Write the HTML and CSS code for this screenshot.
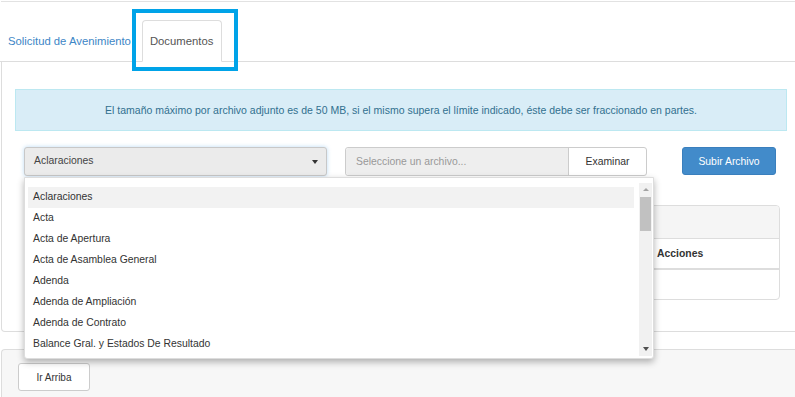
FILE: index.html
```html
<!DOCTYPE html>
<html lang="es">
<head>
<meta charset="UTF-8">
<meta name="viewport" content="width=device-width, initial-scale=1.0">
<title>Documentos</title>
<link rel="stylesheet" href="styles.css">
</head>
<body>
<div class="page">
  <div class="prev-panel"></div>

  <!-- pestañas -->
  <ul class="tabs">
    <li class="tab"><a href="#">Solicitud de Avenimiento</a></li>
    <li class="tab active"><a href="#">Documentos</a></li>
  </ul>

  <div class="tab-content">
    <div class="alert-info">
      El tamaño máximo por archivo adjunto es de 50 MB, si el mismo supera el límite indicado, éste debe ser fraccionado en partes.
    </div>

    <div class="form-row">
      <div class="select-wrap">
        <div class="select">
          <span>Aclaraciones</span>
          <span class="caret"></span>
        </div>
        <!-- lista desplegada -->
        <div class="dropdown">
          <ul class="options">
            <li class="hover">Aclaraciones</li>
            <li>Acta</li>
            <li>Acta de Apertura</li>
            <li>Acta de Asamblea General</li>
            <li>Adenda</li>
            <li>Adenda de Ampliación</li>
            <li>Adenda de Contrato</li>
            <li>Balance Gral. y Estados De Resultado</li>
          </ul>
          <div class="scrollbar">
            <span class="arrow up"></span>
            <span class="thumb"></span>
            <span class="arrow down"></span>
          </div>
        </div>
      </div>
      <div class="file-input">
        <span class="file-name">Seleccione un archivo...</span>
        <span class="file-btn">Examinar</span>
      </div>
      <button class="btn-primary">Subir Archivo</button>
    </div>

    <div class="table-panel">
      <div class="table-head"></div>
      <div class="table-row cols"><span class="col-actions">Acciones</span></div>
      <div class="table-row"></div>
    </div>
  </div>

  <div class="footer">
    <button class="btn-default">Ir Arriba</button>
  </div>
</div>

<div class="highlight"></div>
</body>
</html>
```

FILE: styles.css
```css
html, body {
  margin: 0;
  overflow: hidden;
}

body {
  font-family: "Liberation Sans", Arial, sans-serif;
  color: #333;
  background: #fff;
  position: relative;
}

.page {
  margin-left: 1px;
}

.prev-panel {
  height: 1px;
  border-bottom: 1px solid #e2e2e2;
}

/* pestañas */
.tabs {
  list-style: none;
  margin: 0 -10px 0 -1px;
  padding: 18px 0 0 0;
  display: flex;
  align-items: flex-end;
  border-bottom: 1px solid #ddd;
}

.tab a {
  display: block;
  font-size: 11.3px;
  line-height: 40px;
  text-decoration: none;
  color: #3d86c6;
  padding: 0 11px 0 8px;
  white-space: nowrap;
}

.tab.active {
  margin-bottom: -1px;
}

.tab.active a {
  color: #555;
  background: #fff;
  border: 1px solid #ddd;
  border-bottom-color: #fff;
  border-radius: 4px 4px 0 0;
  padding: 0 8px 0 7px;
}

.tab-content {
  border: 1px solid #ddd;
  border-top: none;
  border-radius: 0 0 4px 4px;
  margin-right: -10px;
  padding: 27px 18px 31px 13px;
}

.alert-info {
  background: #d9edf7;
  border: 1px solid #bce8f1;
  color: #31708f;
  font-size: 10.5px;
  text-align: center;
  height: 40px;
  line-height: 40px;
  width: 770px;
}

.form-row {
  margin-top: 16px;
  padding-left: 9px;
  display: flex;
  height: 29px;
}

.select-wrap {
  position: relative;
  width: 303px;
}

.select {
  height: 29px;
  box-sizing: border-box;
  border: 1px solid #c8c8c8;
  border-radius: 3px;
  background: #ebebeb;
  box-shadow: 0 0 4px rgba(102, 175, 233, 0.45);
  display: flex;
  align-items: center;
  justify-content: space-between;
  padding: 0 8px 2px 9px;
  font-size: 10.4px;
  color: #444;
}

.caret {
  width: 0;
  height: 0;
  border-left: 3.5px solid transparent;
  border-right: 3.5px solid transparent;
  border-top: 4px solid #333;
  margin-top: 3px;
}

.dropdown {
  position: absolute;
  top: 30px;
  left: 0;
  width: 630px;
  height: 182px;
  box-sizing: border-box;
  background: #fff;
  border: 1px solid #ddd;
  border-radius: 0 0 3px 3px;
  box-shadow: 0 3px 7px rgba(0, 0, 0, 0.3);
  padding: 5px 1px 2px 3px;
  display: flex;
  z-index: 5;
}

.options {
  list-style: none;
  margin: 0 5px 0 0;
  padding: 4px 0 0;
  flex: 1;
  overflow: hidden;
}

.options li {
  height: 21px;
  line-height: 20px;
  padding-left: 5px;
  font-size: 10.4px;
  color: #333;
}

.options li.hover {
  background: #f2f2f2;
}

.scrollbar {
  width: 13px;
  background: #f1f1f1;
  display: flex;
  flex-direction: column;
  align-items: center;
}

.scrollbar .arrow {
  width: 0;
  height: 0;
  border-left: 3px solid transparent;
  border-right: 3px solid transparent;
}

.scrollbar .up {
  border-bottom: 3px solid #a3a3a3;
  margin-top: 5px;
}

.scrollbar .thumb {
  width: 11px;
  height: 34px;
  background: #c1c1c1;
  margin-top: 6px;
}

.scrollbar .down {
  border-top: 4px solid #505050;
  margin-top: auto;
  margin-bottom: 5px;
}

.file-input {
  display: flex;
  width: 302px;
  margin-left: 18px;
  height: 29px;
  box-sizing: border-box;
  border: 1px solid #ccc;
  border-radius: 3px;
  font-size: 10.4px;
}

.file-name {
  flex: 1;
  background: #eee;
  color: #999;
  padding-left: 10px;
  line-height: 27px;
  border-radius: 3px 0 0 3px;
}

.file-btn {
  width: 77px;
  border-left: 1px solid #ccc;
  text-align: center;
  line-height: 27px;
  color: #333;
}

.btn-primary {
  width: 94px;
  margin-left: 35px;
  height: 28px;
  border: 1px solid #3a7fbd;
  border-radius: 3px;
  background: #428bca;
  color: #fff;
  font-family: inherit;
  font-size: 10.4px;
  padding: 0;
}

.table-panel {
  margin: 29px 0 0 9px;
  width: 754px;
  border: 1px solid #ddd;
  border-radius: 4px;
  overflow: hidden;
}

.table-head {
  height: 32px;
  background: #f5f5f5;
  border-bottom: 1px solid #ddd;
}

.table-row {
  height: 29px;
}

.table-row.cols {
  border-bottom: 2px solid #ddd;
  display: flex;
  align-items: center;
}

.col-actions {
  margin-left: 632px;
  font-size: 10.4px;
  font-weight: bold;
  color: #333;
}

.footer {
  margin-top: 17px;
  border-top: 1px solid #ddd;
  border-left: 1px solid #ddd;
  border-radius: 4px 0 0 0;
  background: #f7f7f7;
  padding: 13px 0 8px 16px;
}

.btn-default {
  width: 72px;
  height: 28px;
  background: #fff;
  border: 1px solid #ccc;
  border-radius: 3px;
  font-family: inherit;
  font-size: 10px;
  color: #333;
  padding: 0;
}

/* recuadro de resaltado */
.highlight {
  position: absolute;
  left: 132px;
  top: 9px;
  width: 98px;
  height: 54px;
  border: 4px solid #00a3e8;
}
```
